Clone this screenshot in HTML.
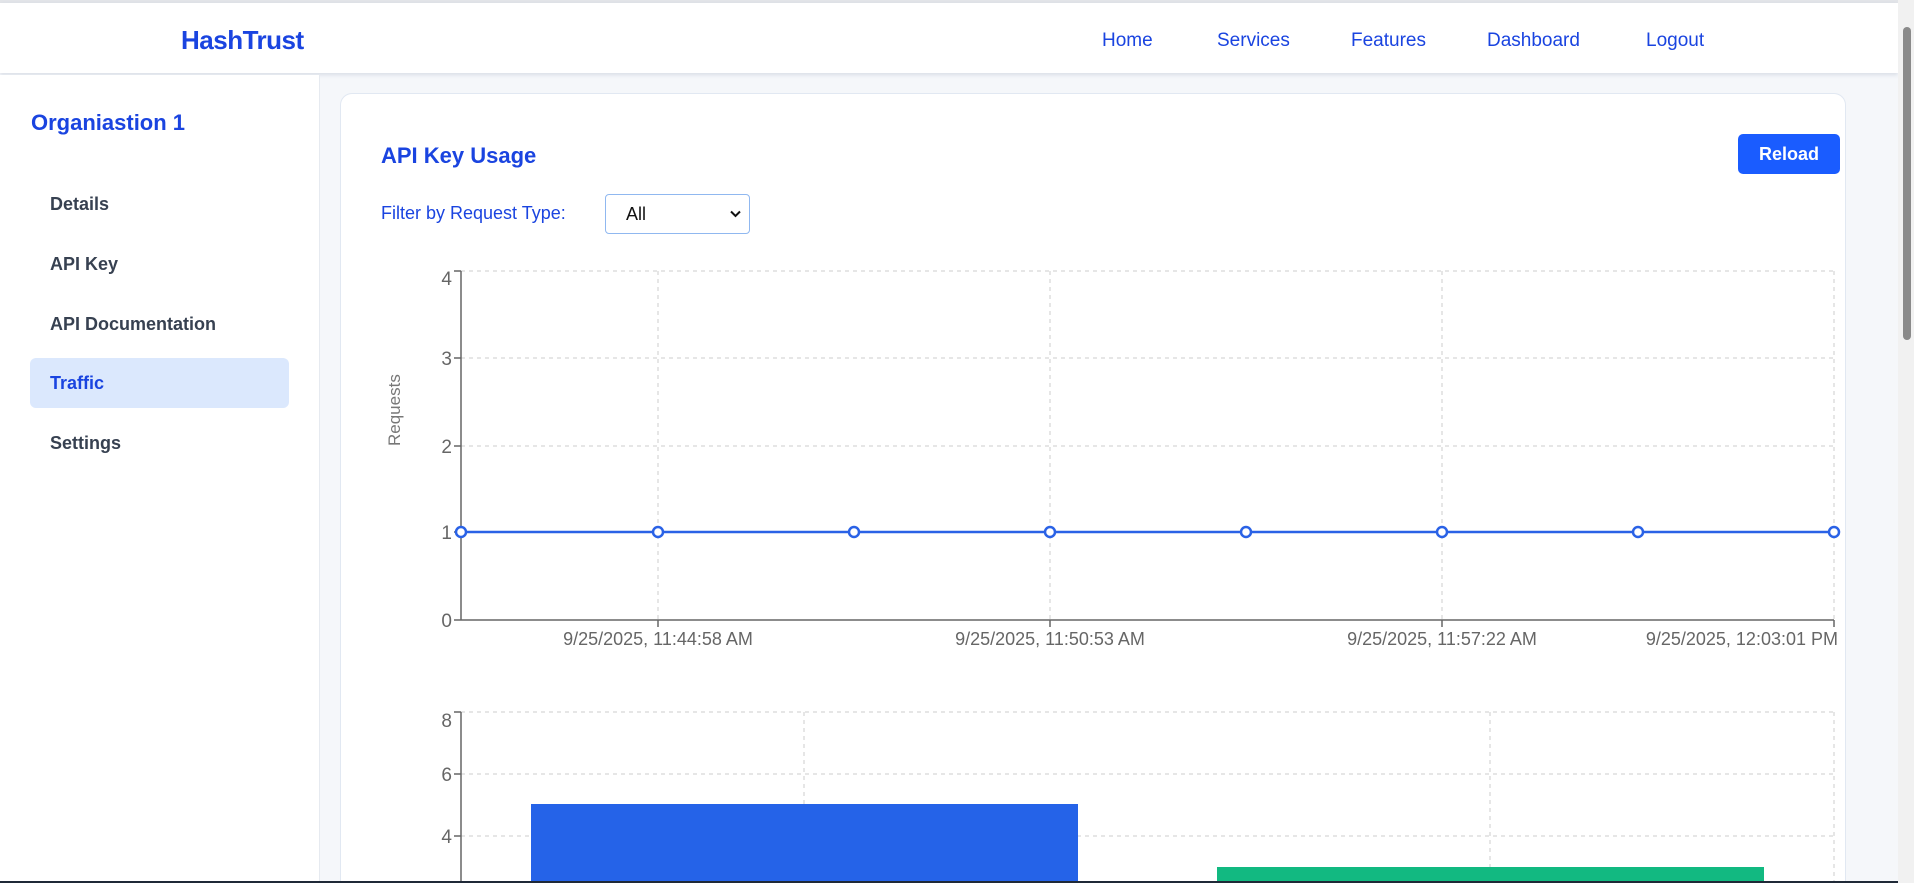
<!DOCTYPE html>
<html><head><meta charset="utf-8"><style>
*{margin:0;padding:0;box-sizing:border-box}
html,body{width:1914px;height:883px;overflow:hidden;background:#f5f7fa;font-family:"Liberation Sans",Arial,sans-serif;position:relative}
.top{position:absolute;left:0;top:0;width:1898px;height:3px;background:#e2e4e8}
.nav{position:absolute;left:0;top:3px;width:1898px;height:70px;background:#fff;box-shadow:0 2px 4px rgba(60,80,120,.15)}
.logo{position:absolute;left:181px;top:22px;font-size:26px;font-weight:bold;color:#1a44e0;letter-spacing:-.5px}
.nav a{position:absolute;top:27px;font-size:19px;color:#1a44e0;text-decoration:none}
.side{position:absolute;left:0;top:75px;width:320px;height:808px;background:#fff;border-right:1px solid #e6eaf0}
.org{position:absolute;left:31px;top:35px;font-size:22px;font-weight:bold;color:#1a44e0}
.mi{position:absolute;left:30px;width:259px;height:50px;padding-left:20px;line-height:50px;font-size:18px;font-weight:bold;color:#374151;border-radius:6px}
.mi.act{background:#dbe8fd;color:#1a44e0}
.card{position:absolute;left:340px;top:93px;width:1506px;height:790px;background:#fff;border:1px solid #e1e8f2;border-bottom:none;border-radius:12px 12px 0 0;overflow:hidden}
.h{position:absolute;left:381px;top:143px;font-size:22px;font-weight:bold;color:#1a44e0}
.btn{position:absolute;left:1738px;top:134px;width:102px;height:40px;background:#1a5cff;border-radius:5px;color:#fff;font-size:18px;font-weight:bold;text-align:center;line-height:40px}
.fl{position:absolute;left:381px;top:203px;font-size:18px;color:#1a44e0}
.sel{position:absolute;left:605px;top:194px;width:145px;height:40px;border:1px solid #90b8f0;border-radius:4px;font-size:18px;padding-left:20px;line-height:38px;color:#111}
.sb{position:absolute;left:1898px;top:0;width:16px;height:883px;background:#f1f1f1}
.thumb{position:absolute;left:1903px;top:27px;width:8px;height:313px;background:#8a8a8a;border-radius:4px}
</style></head><body>
<div class="top"></div>
<div class="nav">
<div class="logo">HashTrust</div>
<a style="left:1102px">Home</a><a style="left:1217px">Services</a><a style="left:1351px">Features</a><a style="left:1487px">Dashboard</a><a style="left:1646px">Logout</a>
</div>
<div class="side">
<div class="org">Organiastion 1</div>
<div class="mi" style="top:104px">Details</div>
<div class="mi" style="top:164px">API Key</div>
<div class="mi" style="top:224px">API Documentation</div>
<div class="mi act" style="top:283px">Traffic</div>
<div class="mi" style="top:343px">Settings</div>
</div>
<div class="card"></div>
<div class="h">API Key Usage</div>
<div class="btn">Reload</div>
<div class="fl">Filter by Request Type:</div>
<div class="sel">All<svg style="position:absolute;right:8px;top:15px" width="11" height="8" viewBox="0 0 11 8"><path d="M1 1.5L5.5 6 10 1.5" stroke="#111" stroke-width="2" fill="none"/></svg></div>
<svg style="position:absolute;left:0;top:0;overflow:hidden" width="1898" height="883">
<g stroke="#ccc" stroke-dasharray="4 4" stroke-width="1" fill="none">
<path d="M461 271H1834M461 358H1834M461 446H1834M658 271V620M1050 271V620M1442 271V620M1834 271V620"/>
<path d="M461 712H1834M461 774H1834M461 836H1834M804 712V883M1490 712V883M1834 712V883"/>
</g>
<g stroke="#666" stroke-width="1.5" fill="none">
<path d="M461 271V620H1834M454 271H461M454 358H461M454 446H461M454 532H461M454 620H461M658 620V627M1050 620V627M1442 620V627M1834 620V627"/>
<path d="M461 712V883M454 712H461M454 774H461M454 836H461"/>
</g>
<g font-size="19" fill="#666" text-anchor="end">
<text x="452" y="285">4</text><text x="452" y="365">3</text><text x="452" y="453">2</text><text x="452" y="539">1</text><text x="452" y="627">0</text>
<text x="452" y="727">8</text><text x="452" y="781">6</text><text x="452" y="843">4</text>
</g>
<g font-size="18" fill="#666" text-anchor="middle">
<text x="658" y="645">9/25/2025, 11:44:58 AM</text><text x="1050" y="645">9/25/2025, 11:50:53 AM</text><text x="1442" y="645">9/25/2025, 11:57:22 AM</text><text x="1838" y="645" text-anchor="end">9/25/2025, 12:03:01 PM</text>
</g>
<text transform="translate(400 446) rotate(-90)" font-size="17" fill="#777">Requests</text>
<path d="M461 532H1834" stroke="#2a62e6" stroke-width="2.5"/>
<g fill="#fff" stroke="#2a62e6" stroke-width="2.5">
<circle cx="461" cy="532" r="5"/><circle cx="658" cy="532" r="5"/><circle cx="854" cy="532" r="5"/><circle cx="1050" cy="532" r="5"/><circle cx="1246" cy="532" r="5"/><circle cx="1442" cy="532" r="5"/><circle cx="1638" cy="532" r="5"/><circle cx="1834" cy="532" r="5"/>
</g>
<rect x="531" y="804" width="547" height="79" fill="#2563e8"/>
<rect x="1217" y="867" width="547" height="16" fill="#12b981"/>
<rect x="0" y="881" width="1898" height="2" fill="#1f2937"/>
</svg>
<div class="sb"></div><div class="thumb"></div>
</body></html>
